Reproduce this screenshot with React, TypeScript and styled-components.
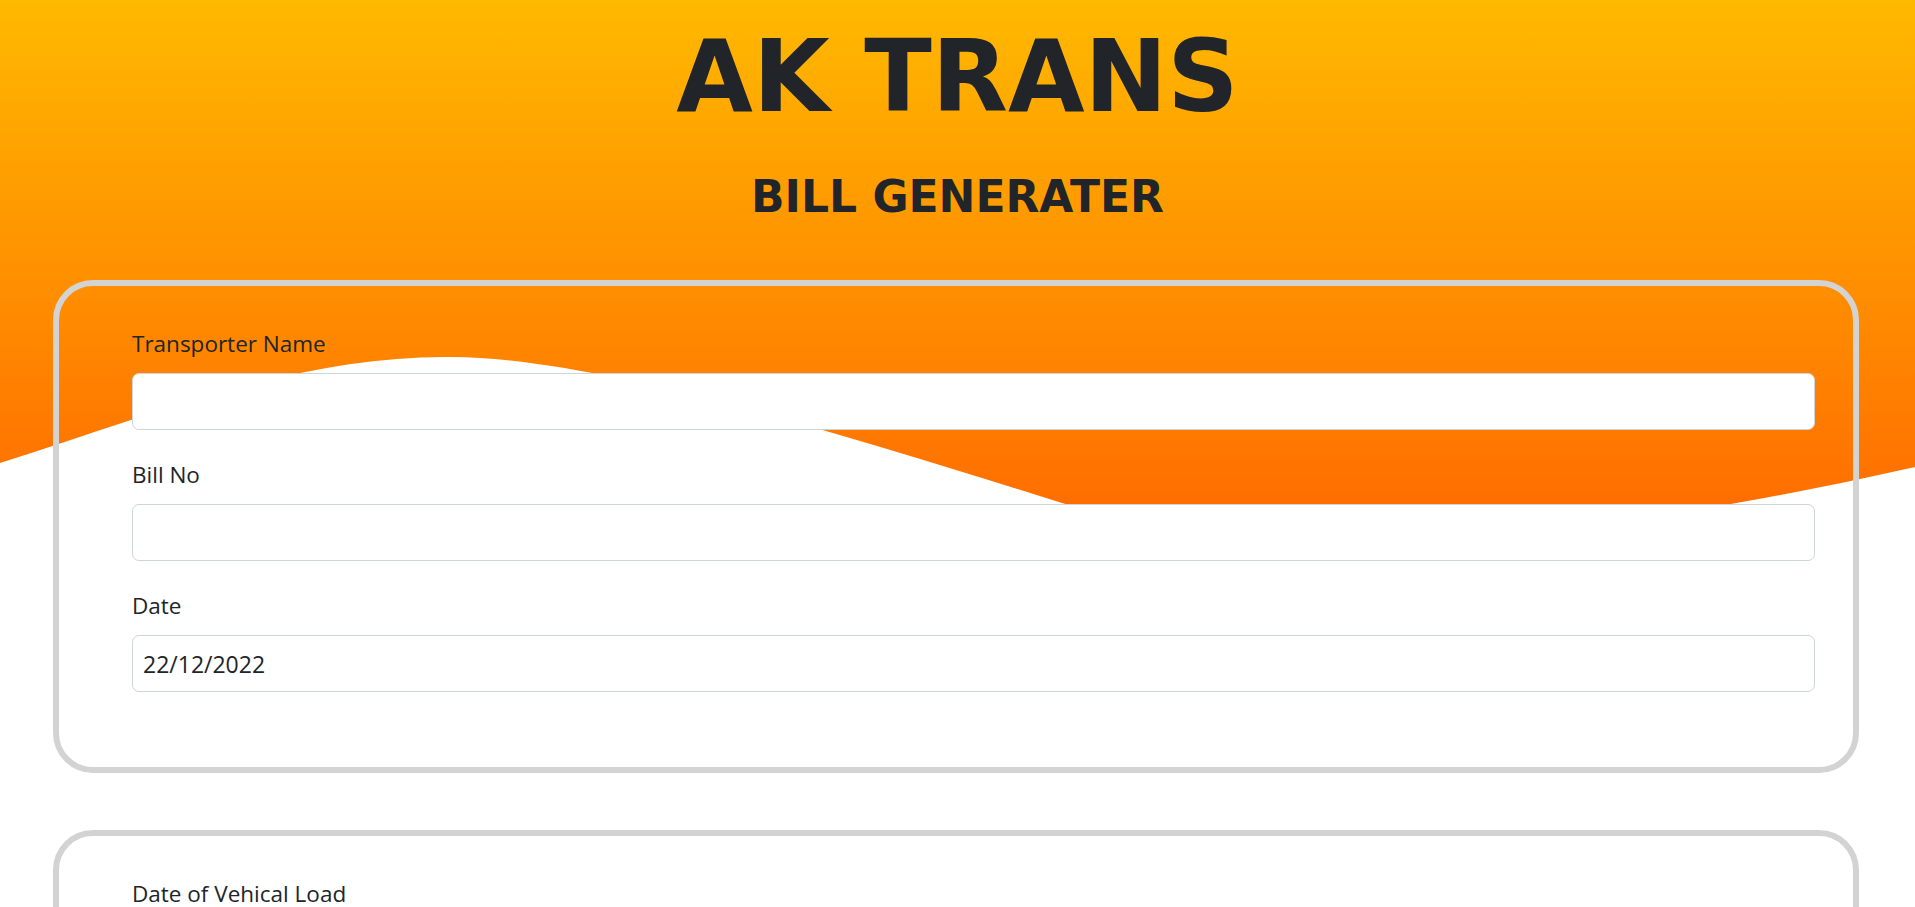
import React from "react";
import styled, { createGlobalStyle } from "styled-components";

const GlobalStyle = createGlobalStyle`
  html, body {
    margin: 0;
    padding: 0;
    background: #fff;
  }
  body {
    font-family: "Open Sans", "Noto Sans", sans-serif;
    color: #212529;
  }
  * {
    box-sizing: border-box;
  }
`;

const Page = styled.div`
  position: relative;
  min-height: 100vh;
  overflow: hidden;
`;

const Wave = styled.svg`
  position: absolute;
  top: 0;
  left: 0;
  width: 100%;
  height: 560px;
  z-index: 0;
`;

const Content = styled.div`
  position: relative;
  z-index: 1;
  padding-bottom: 60px;
`;

const Header = styled.header`
  display: flex;
  flex-direction: column;
  align-items: center;
`;

const Title = styled.h1`
  margin: 17px 0 0;
  font-family: "DejaVu Sans", Verdana, sans-serif;
  font-weight: 700;
  font-size: 99px;
  line-height: 119px;
  color: #212529;
`;

const SubTitle = styled.h2`
  margin: 35px 0 0;
  font-family: "DejaVu Sans", Verdana, sans-serif;
  font-weight: 700;
  font-size: 44px;
  line-height: 52px;
  color: #212529;
`;

const Card = styled.section<{ first?: boolean }>`
  margin: ${({ first }) => (first ? "57px" : "57px")} 56px 0 53px;
  padding: 41px 38px 75px 73px;
  border: 6px solid #d3d3d3;
  border-radius: 40px;
  background: transparent;
  display: flex;
  flex-direction: column;
  gap: 28px;
`;

const Field = styled.div`
  display: flex;
  flex-direction: column;
  gap: 13px;
`;

const Label = styled.label`
  font-size: 22.5px;
  line-height: 33px;
  color: #212529;
`;

const Input = styled.input`
  width: 100%;
  height: 57px;
  padding: 0 10px;
  font-family: "Open Sans", "Noto Sans", sans-serif;
  font-size: 23px;
  color: #212529;
  background: #fff;
  border: 1px solid #ced4da;
  border-radius: 7px;
  outline: none;
`;

interface FieldRowProps {
  label: string;
  value?: string;
}

const FieldRow: React.FC<FieldRowProps> = ({ label, value }) => (
  <Field>
    <Label>{label}</Label>
    <Input type="text" defaultValue={value} />
  </Field>
);

export default function App() {
  return (
    <Page>
      <GlobalStyle />
      <Wave viewBox="0 0 1915 560" preserveAspectRatio="none">
        <defs>
          <linearGradient id="bg" x1="0" y1="0" x2="0" y2="560" gradientUnits="userSpaceOnUse">
            <stop offset="0" stopColor="#ffb900" />
            <stop offset="1" stopColor="#ff6600" />
          </linearGradient>
        </defs>
        <path
          fill="url(#bg)"
          d="M0,463 C150,415 300,355 452,357 C590,357 830,430 1062,503 C1250,560 1500,560 1915,467 L1915,0 L0,0 Z"
        />
      </Wave>
      <Content>
        <Header>
          <Title>AK TRANS</Title>
          <SubTitle>BILL GENERATER</SubTitle>
        </Header>
        <Card first>
          <FieldRow label="Transporter Name" />
          <FieldRow label="Bill No" />
          <FieldRow label="Date" value="22/12/2022" />
        </Card>
        <Card>
          <FieldRow label="Date of Vehical Load" />
          <FieldRow label="Vehical No" />
          <FieldRow label="From" />
          <FieldRow label="To" />
        </Card>
      </Content>
    </Page>
  );
}
